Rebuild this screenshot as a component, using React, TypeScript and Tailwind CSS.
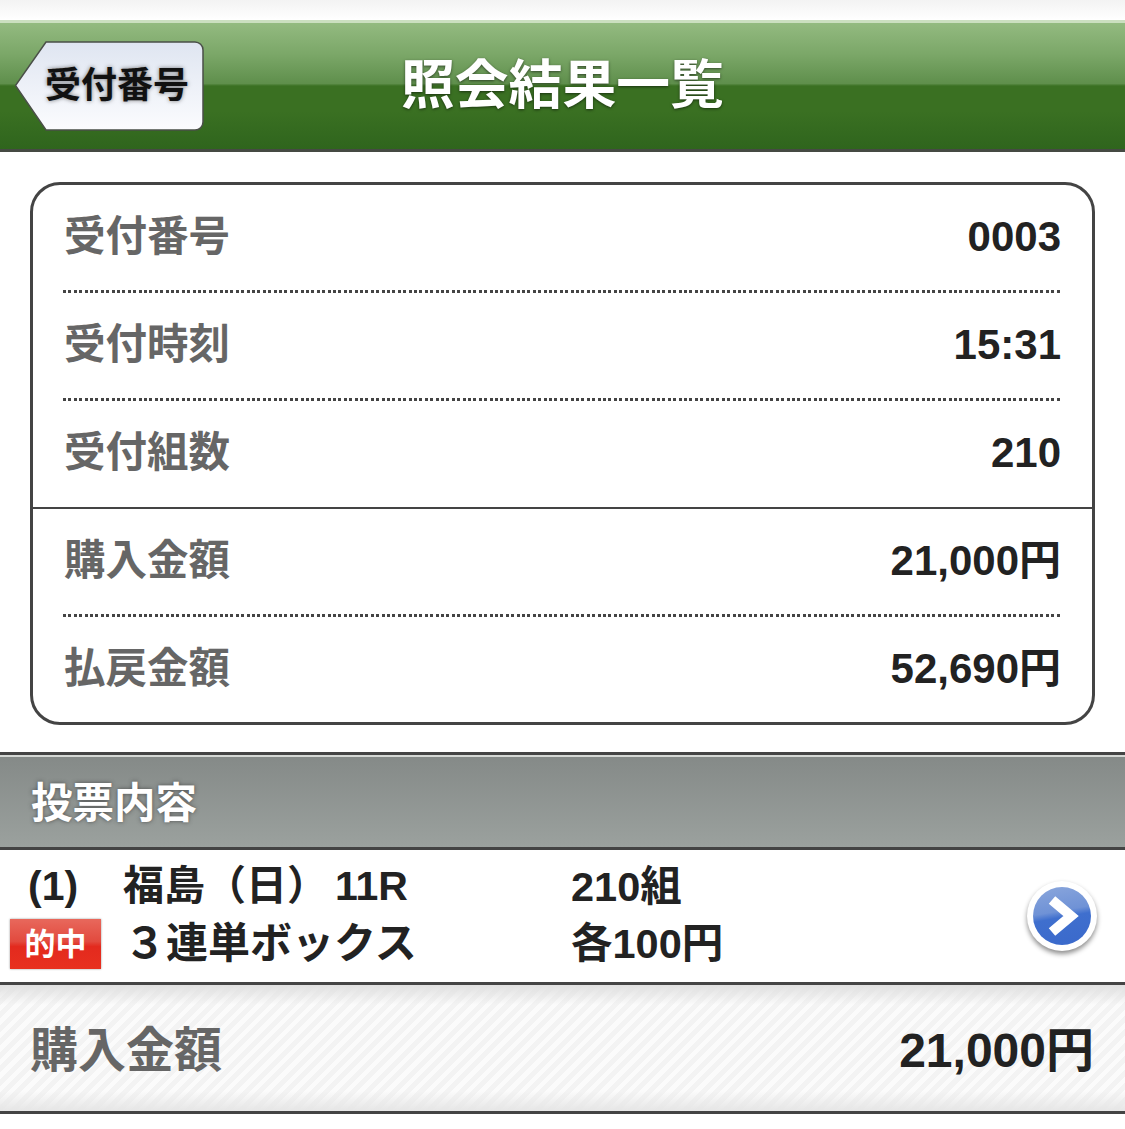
import React from 'react';

const font = "font-['Liberation_Sans','Noto_Sans_CJK_JP',sans-serif]";

const upperRows = [
  { label: '受付番号', value: '0003' },
  { label: '受付時刻', value: '15:31' },
  { label: '受付組数', value: '210' },
];

const lowerRows = [
  { label: '購入金額', value: '21,000円' },
  { label: '払戻金額', value: '52,690円' },
];

const Dots = () => (
  <div className="mx-[30px] -mt-[1px] h-[3px] bg-[repeating-linear-gradient(90deg,#444_0,#444_3px,transparent_3px,transparent_5.400px)]" />
);

const InfoRow = ({ label, value }: { label: string; value: string }) => (
  <div className="flex h-[106px] items-center justify-between pl-[31px] pr-[31px] pb-[2px] font-bold">
    <span className="text-[41.500px] leading-none text-[#666]">{label}</span>
    <span className="text-[42px] leading-none text-[#222]">{value}</span>
  </div>
);

const BackButton = () => (
  <div className="relative ml-[15px] flex h-[90px] w-[189px] items-center justify-end pr-[15px]">
    <svg className="absolute inset-0" width="189" height="90" viewBox="0 0 189 90">
      <defs>
        <linearGradient id="back-fill" x1="0" y1="0" x2="0" y2="1">
          <stop offset="0" stopColor="#dfe5f1" />
          <stop offset="1" stopColor="#fbfcfe" />
        </linearGradient>
      </defs>
      <path
        d="M31 1H180a8 8 0 0 1 8 8V81a8 8 0 0 1-8 8H31L0.500 44.500Z"
        fill="url(#back-fill)"
        stroke="#4a4f48"
        strokeWidth="1.500"
      />
    </svg>
    <span className="relative text-[36px] leading-none font-bold text-[#111] [text-shadow:0_0_4px_rgba(0,0,0,0.5)]">
      受付番号
    </span>
  </div>
);

const NextIcon = () => (
  <div className="flex h-[70px] w-[70px] items-center justify-center rounded-full bg-white shadow-[0_3px_5px_rgba(0,0,0,0.45)]">
    <div className="flex h-[58px] w-[58px] items-center justify-center rounded-full bg-[linear-gradient(170deg,#8aa6dc_0%,#6f92d6_42%,#3f6fce_52%,#3a69cb_100%)]">
      <svg width="34" height="42" viewBox="0 0 34 42">
        <path d="M7 5l19 16L7 37" fill="none" stroke="#fff" strokeWidth="10" />
      </svg>
    </div>
  </div>
);

export default function App() {
  return (
    <div className={`h-[1129px] w-[1125px] overflow-hidden bg-white ${font}`}>
      <div className="h-[20px] bg-gradient-to-b from-[#f3f3f3] to-white" />

      <header className="relative flex h-[132px] items-center border-t-[3px] border-b-[3px] border-t-[#cbdfc0] border-b-[#454a43] bg-[linear-gradient(180deg,#93ba80_0%,#7ba768_25%,#5f8f4c_48%,#3a7022_50%,#3a7022_70%,#2f651d_100%)]">
        <BackButton />
        <h1 className="absolute left-[401px] top-[36px] text-[53.800px] leading-none font-bold text-white [text-shadow:0_1px_3px_rgba(0,0,0,0.55)]">
          照会結果一覧
        </h1>
      </header>

      <section className="ml-[30px] mt-[30px] h-[543px] w-[1065px] rounded-[30px] border-[3px] border-[#444] bg-white">
        {upperRows.map((row, i) => (
          <div key={row.label}>
            <InfoRow {...row} />
            {i < upperRows.length - 1 && <Dots />}
          </div>
        ))}
        <div className="h-[2px] bg-[#444]" />
        {lowerRows.map((row, i) => (
          <div key={row.label}>
            <InfoRow {...row} />
            {i < lowerRows.length - 1 && <Dots />}
          </div>
        ))}
      </section>

      <div className="mt-[27px] border-t-[3px] border-[#444]" />
      <div className="flex h-[95px] items-center border-t-[2px] border-b-[3px] border-t-[#d5d8d5] border-b-[#444] bg-gradient-to-b from-[#858a88] to-[#9ba19e] pl-[31px] pt-[4px]">
        <h2 className="text-[41.500px] leading-none font-bold text-white [text-shadow:0_0_4px_rgba(50,50,50,0.7)]">
          投票内容
        </h2>
      </div>

      <div className="flex h-[135px] items-center border-b-[3px] border-[#444] bg-white pr-[28px]">
        <div className="w-[571px] pl-[10px]">
          <div className="flex h-[46px] items-center pt-[1px] text-[41px] leading-none font-bold text-[#222]">
            <span className="ml-[18px] w-[95px]">(1)</span>
            <span>福島（日）</span>
            <span className="ml-[7px]">11R</span>
          </div>
          <div className="mt-[10px] flex h-[50px] items-center text-[42px] leading-none font-bold text-[#222]">
            <span className="flex h-[50px] w-[91px] items-center justify-center bg-[linear-gradient(180deg,#e8685c_0%,#e24a3e_45%,#e32a1e_55%,#e8301f_100%)] text-[31px] text-white shadow-[0_0_2px_rgba(0,0,0,0.4)]">
              的中
            </span>
            <span className="ml-[23px]">３連単ボックス</span>
          </div>
        </div>
        <div className="flex-1 text-[41.500px] leading-none font-bold text-[#222]">
          <div className="flex h-[46px] items-center pt-[1px]">210組</div>
          <div className="mt-[10px] flex h-[50px] items-center">各100円</div>
        </div>
        <NextIcon />
      </div>

      <div className="flex h-[129px] items-center justify-between border-b-[3px] border-[#444] bg-[linear-gradient(180deg,#e0e0e0_0,rgba(240,240,240,0)_20px,rgba(240,240,240,0)_106px,#e6e6e6_100%),repeating-linear-gradient(135deg,#f3f3f3_0,#f3f3f3_5px,#fbfbfb_5px,#fbfbfb_9.500px)] pl-[30px] pr-[31px] pt-[6px] font-bold">
        <span className="text-[48px] leading-none text-[#666]">購入金額</span>
        <span className="text-[48px] leading-none text-[#222]">21,000円</span>
      </div>
    </div>
  );
}
